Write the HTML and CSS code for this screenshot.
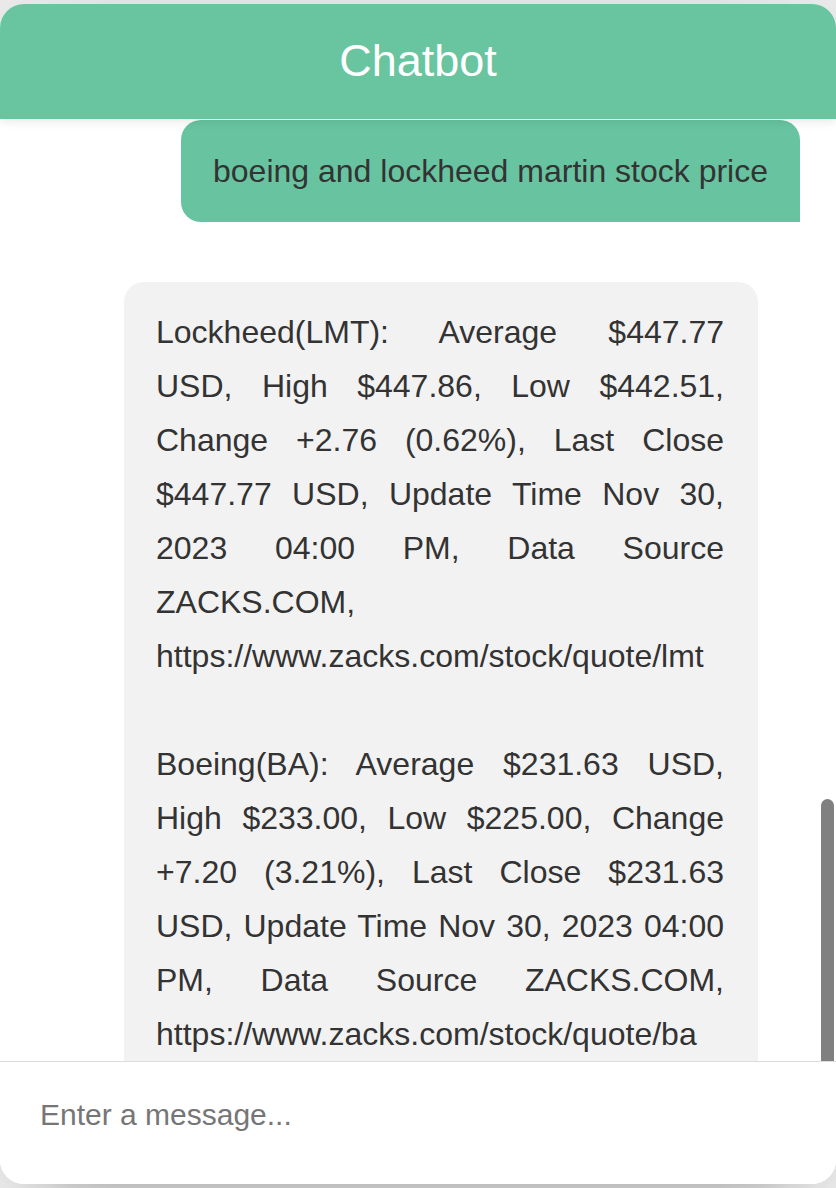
FILE: index.html
```html
<!DOCTYPE html>
<html lang="en">
<head>
<meta charset="utf-8">
<title>Chatbot</title>
<link rel="stylesheet" href="styles.css">
</head>
<body>
<div class="chatbot">
  <header class="chat-header">
    <h2 class="chat-title">Chatbot</h2>
  </header>
  <div class="chatbox">
    <ul class="chat-list">
      <li class="chat outgoing">
        <p class="bubble bubble-out">boeing and lockheed martin stock price</p>
      </li>
      <li class="chat incoming">
        <p class="bubble bubble-in">Lockheed(LMT): Average $447.77 USD, High $447.86, Low $442.51, Change +2.76 (0.62%), Last Close $447.77 USD, Update Time Nov 30, 2023 04:00 PM, Data Source ZACKS.COM, https://www.zacks.com/stock/quote/lmt<br><br>Boeing(BA): Average $231.63 USD, High $233.00, Low $225.00, Change +7.20 (3.21%), Last Close $231.63 USD, Update Time Nov 30, 2023 04:00 PM, Data Source ZACKS.COM, https://www.zacks.com/stock/quote/ba</p>
      </li>
    </ul>
    <div class="scroll-thumb"></div>
  </div>
  <div class="chat-input">
    <textarea class="input-field" placeholder="Enter a message..."></textarea>
  </div>
</div>
</body>
</html>
```
FILE: styles.css
```css
* {
  box-sizing: border-box;
}

html, body {
  margin: 0;
  padding: 0;
}

body {
  background: #efefef;
  font-family: "Liberation Sans", Arial, Helvetica, sans-serif;
  padding-top: 4px;
  height: 1188px;
  overflow: hidden;
}

.chatbot {
  width: 836px;
  height: 1180px;
  background: #fff;
  border-radius: 24px;
  overflow: hidden;
  display: flex;
  flex-direction: column;
  box-shadow: 0 0 128px 0 rgba(0, 0, 0, 0.1), 0 32px 64px -48px rgba(0, 0, 0, 0.5);
}

.chat-header {
  position: relative;
  z-index: 2;
  height: 115px;
  flex: 0 0 115px;
  background: #68c5a0;
  display: flex;
  align-items: center;
  justify-content: center;
  box-shadow: 0 2px 10px rgba(0, 0, 0, 0.1);
}

.chat-title {
  margin: 0;
  color: #fff;
  font-size: 45px;
  font-weight: normal;
  line-height: 1;
  padding-bottom: 2px;
}

.chatbox {
  position: relative;
  flex: 1 1 auto;
  overflow: hidden;
}

.chat-list {
  list-style: none;
  margin: 0;
  padding: 1px 0 0 0;
}

.chat {
  display: flex;
}

.outgoing {
  justify-content: flex-end;
  padding-right: 36px;
}

.incoming {
  margin-top: 60px;
  padding-left: 124px;
}

.bubble {
  margin: 0;
  font-size: 32px;
  line-height: 54px;
  color: #333;
}

.bubble-out {
  background: #68c4a0;
  padding: 24px 32px;
  border-radius: 20px 20px 0 20px;
}

.bubble-in {
  width: 634px;
  background: #f2f2f2;
  padding: 23px 34px 24px 32px;
  border-radius: 20px 20px 20px 0;
  text-align: justify;
}

.scroll-thumb {
  position: absolute;
  top: 680px;
  right: 2px;
  width: 13px;
  height: 300px;
  background: #808080;
  border-radius: 7px;
}

.chat-input {
  position: relative;
  z-index: 2;
  flex: 0 0 123px;
  background: #fff;
  border-top: 1px solid #dcdcdc;
  padding: 6px 40px;
  display: flex;
}

.input-field {
  width: 100%;
  height: 110px;
  border: none;
  outline: none;
  resize: none;
  padding: 30px 0;
  font-family: "Liberation Sans", Arial, Helvetica, sans-serif;
  font-size: 30px;
  color: #333;
  background: transparent;
}

.input-field::placeholder {
  color: #767676;
}
```
